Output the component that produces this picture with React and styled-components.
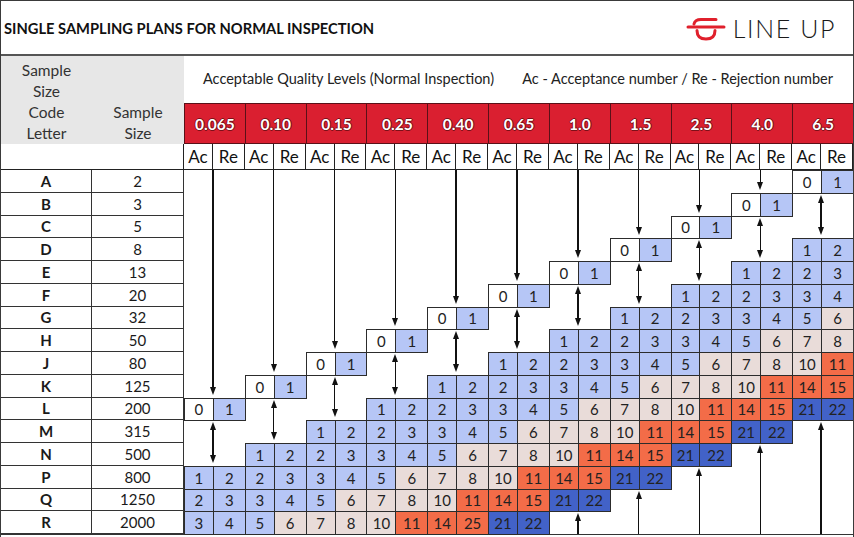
import React from 'react'
import styled, { createGlobalStyle } from 'styled-components'

const GlobalStyle = createGlobalStyle`
  body {
    margin: 0;
    background: #fff;
    font-family: Lato, "Open Sans", sans-serif;
    color: #1c1c1c;
  }
`

const LETTERS = [
  ['A', 2], ['B', 3], ['C', 5], ['D', 8], ['E', 13], ['F', 20], ['G', 32], ['H', 50],
  ['J', 80], ['K', 125], ['L', 200], ['M', 315], ['N', 500], ['P', 800], ['Q', 1250], ['R', 2000]
]
const AQLS = ['0.065', '0.10', '0.15', '0.25', '0.40', '0.65', '1.0', '1.5', '2.5', '4.0', '6.5']
const PLANS = [[1, 2], [2, 3], [3, 4], [5, 6], [7, 8], [10, 11], [14, 15], [21, 22]]

const TONES = {
  white: '#ffffff',
  blue: '#b6c6f6',
  sand: '#e9dcd9',
  orange: '#f36c48',
  navy: '#4262c8'
}

// first data row sits on grid line 4 (three header rows above it)
const ROW0 = 4

const planAt = (r, c) => {
  const z = 10 - c
  if (r === z) return [0, 1]
  const k = r - z - 3
  if (k < 0 || k >= PLANS.length) return null
  if (r === 15 && c === 4) return [14, 25]
  return PLANS[k]
}

const toneOf = (v) => {
  if (v === 0) return 'white'
  if (v <= 5) return 'blue'
  if (v <= 10) return 'sand'
  if (v <= 15 || v === 25) return 'orange'
  return 'navy'
}

const arrowsFor = (c) => {
  const z = 10 - c
  const list = []
  if (z > 0) list.push({ kind: 'down', from: ROW0, to: ROW0 + z })
  list.push({ kind: 'both', from: ROW0 + z + 1, to: ROW0 + z + 3 })
  const upStart = z + 11
  if (upStart <= 15) list.push({ kind: 'up', from: ROW0 + upStart, to: ROW0 + 16 })
  return list
}

const Sheet = styled.div`
  width: 854px;
  height: 537px;
  box-sizing: border-box;
  border: 1px solid #3a3a3a;
  border-bottom: none;
  display: flex;
  flex-direction: column;
  overflow: hidden;
`

const TitleBar = styled.header`
  height: 53px;
  flex: none;
  display: flex;
  align-items: center;
  justify-content: space-between;
  padding: 0 17px 0 3px;
  border-bottom: 2px solid #555;
`

const Title = styled.h1`
  margin: 0;
  font-size: 14.7px;
  font-weight: 700;
  color: #111;
`

const Logo = styled.div`
  display: flex;
  align-items: center;
  gap: 7px;
  margin-top: 1px;
`

const LogoText = styled.span`
  font-size: 25px;
  font-weight: 300;
  letter-spacing: 1.6px;
  color: #1a1a1a;
`

const Grid = styled.div`
  display: grid;
  grid-template-columns: 91px 92px repeat(11, 29fr 32fr);
  grid-template-rows: 47px 41px 26px repeat(16, 22.75px);
  border-bottom: 1px solid #333;
`

const Corner = styled.div`
  grid-row: 1 / 3;
  grid-column: ${p => p.col};
  background: #e7e7e7;
  display: flex;
  flex-direction: column;
  justify-content: flex-end;
  align-items: center;
  font-size: 15.5px;
  line-height: 21px;
  color: #333;
`

const Legend = styled.div`
  grid-row: 1;
  grid-column: 3 / -1;
  display: flex;
  align-items: center;
  justify-content: space-between;
  padding: 0 20px 2px 19px;
  font-size: 14.5px;
  color: #222;
`

const Aql = styled.div`
  grid-row: 2;
  grid-column: span 2;
  background: #da1f30;
  border: 1px solid #5a1118;
  margin-right: -1px;
  display: flex;
  align-items: center;
  justify-content: center;
  color: #fff;
  font-weight: 700;
  font-size: 15.5px;
  text-shadow: 1px 0 #7d0f18, -1px 0 #7d0f18, 0 1px #7d0f18, 0 -1px #7d0f18;
`

const Blank = styled.div`
  grid-row: 3;
  grid-column: 1 / 3;
  border-right: 1px solid #222;
  border-bottom: 1px solid #222;
`

const SubHead = styled.div`
  grid-row: 3;
  border-right: 1px solid #222;
  border-bottom: 1px solid #222;
  display: flex;
  align-items: center;
  justify-content: center;
  font-size: 17px;
  color: #111;
`

const RowHead = styled.div`
  border-right: 1px solid #333;
  border-bottom: 1px solid #333;
  display: flex;
  align-items: center;
  justify-content: center;
  font-size: 15px;
  font-weight: ${p => (p.bold ? 700 : 400)};
  color: #1a1a1a;
`

const Cell = styled.div`
  grid-row: ${p => p.row};
  grid-column: ${p => p.col};
  background: ${p => TONES[p.tone]};
  border: 1px solid #2c2c2c;
  margin: 0 -1px -1px 0;
  display: flex;
  align-items: center;
  justify-content: center;
  font-size: 15px;
  color: #222;
`

const Arrow = styled.div`
  grid-row: ${p => p.from} / ${p => p.to};
  grid-column: ${p => p.col};
  justify-self: end;
  width: 10px;
  margin-right: -5px;
  display: flex;
  flex-direction: column;
  align-items: center;
  padding: ${p => (p.kind === 'down' ? '0' : '2px')} 0 ${p => (p.kind === 'up' ? '0' : '3px')};
`

const Shaft = styled.div`
  flex: 1;
  width: 1.5px;
  background: #111;
`

const Head = styled.div`
  width: 0;
  height: 0;
  border-left: 3.5px solid transparent;
  border-right: 3.5px solid transparent;
  ${p => (p.up ? 'border-bottom: 8px solid #111;' : 'border-top: 8px solid #111;')}
`

const LogoMark = () => (
  <svg width='40' height='27' viewBox='0 0 40 27' fill='none' stroke='#e0202c' strokeWidth='3' strokeLinecap='round'>
    <path d='M2 12 H38' />
    <path d='M8 9 Q9 4.5 15 4.5 H30' />
    <path d='M11 15.5 Q11 24 20 24 Q29 24 29 15.5' />
  </svg>
)

export default function App () {
  const cells = []
  LETTERS.forEach(([letter, size], r) => {
    const row = ROW0 + r
    cells.push(<RowHead key={`l${r}`} bold style={{ gridRow: row, gridColumn: 1 }}>{letter}</RowHead>)
    cells.push(<RowHead key={`s${r}`} style={{ gridRow: row, gridColumn: 2 }}>{size}</RowHead>)
    AQLS.forEach((_, c) => {
      const plan = planAt(r, c)
      if (!plan) return
      plan.forEach((v, i) => {
        cells.push(
          <Cell key={`${r}-${c}-${i}`} row={row} col={3 + 2 * c + i} tone={toneOf(v)}>{v}</Cell>
        )
      })
    })
  })

  const arrows = []
  AQLS.forEach((_, c) => {
    arrowsFor(c).forEach((a, i) => {
      arrows.push(
        <Arrow key={`a${c}-${i}`} col={3 + 2 * c} from={a.from} to={a.to} kind={a.kind}>
          {a.kind !== 'down' && <Head up />}
          <Shaft />
          {a.kind !== 'up' && <Head />}
        </Arrow>
      )
    })
  })

  return (
    <Sheet>
      <GlobalStyle />
      <TitleBar>
        <Title>SINGLE SAMPLING PLANS FOR NORMAL INSPECTION</Title>
        <Logo>
          <LogoMark />
          <LogoText>LINE UP</LogoText>
        </Logo>
      </TitleBar>
      <Grid>
        <Corner col={1}>
          <span>Sample</span>
          <span>Size</span>
          <span>Code</span>
          <span>Letter</span>
        </Corner>
        <Corner col={2}>
          <span>Sample</span>
          <span>Size</span>
        </Corner>
        <Legend>
          <span>Acceptable Quality Levels (Normal Inspection)</span>
          <span>Ac - Acceptance number / Re - Rejection number</span>
        </Legend>
        {AQLS.map(a => <Aql key={a}>{a}</Aql>)}
        <Blank />
        {AQLS.map(a => (
          <React.Fragment key={`h${a}`}>
            <SubHead>Ac</SubHead>
            <SubHead>Re</SubHead>
          </React.Fragment>
        ))}
        {cells}
        {arrows}
      </Grid>
    </Sheet>
  )
}
